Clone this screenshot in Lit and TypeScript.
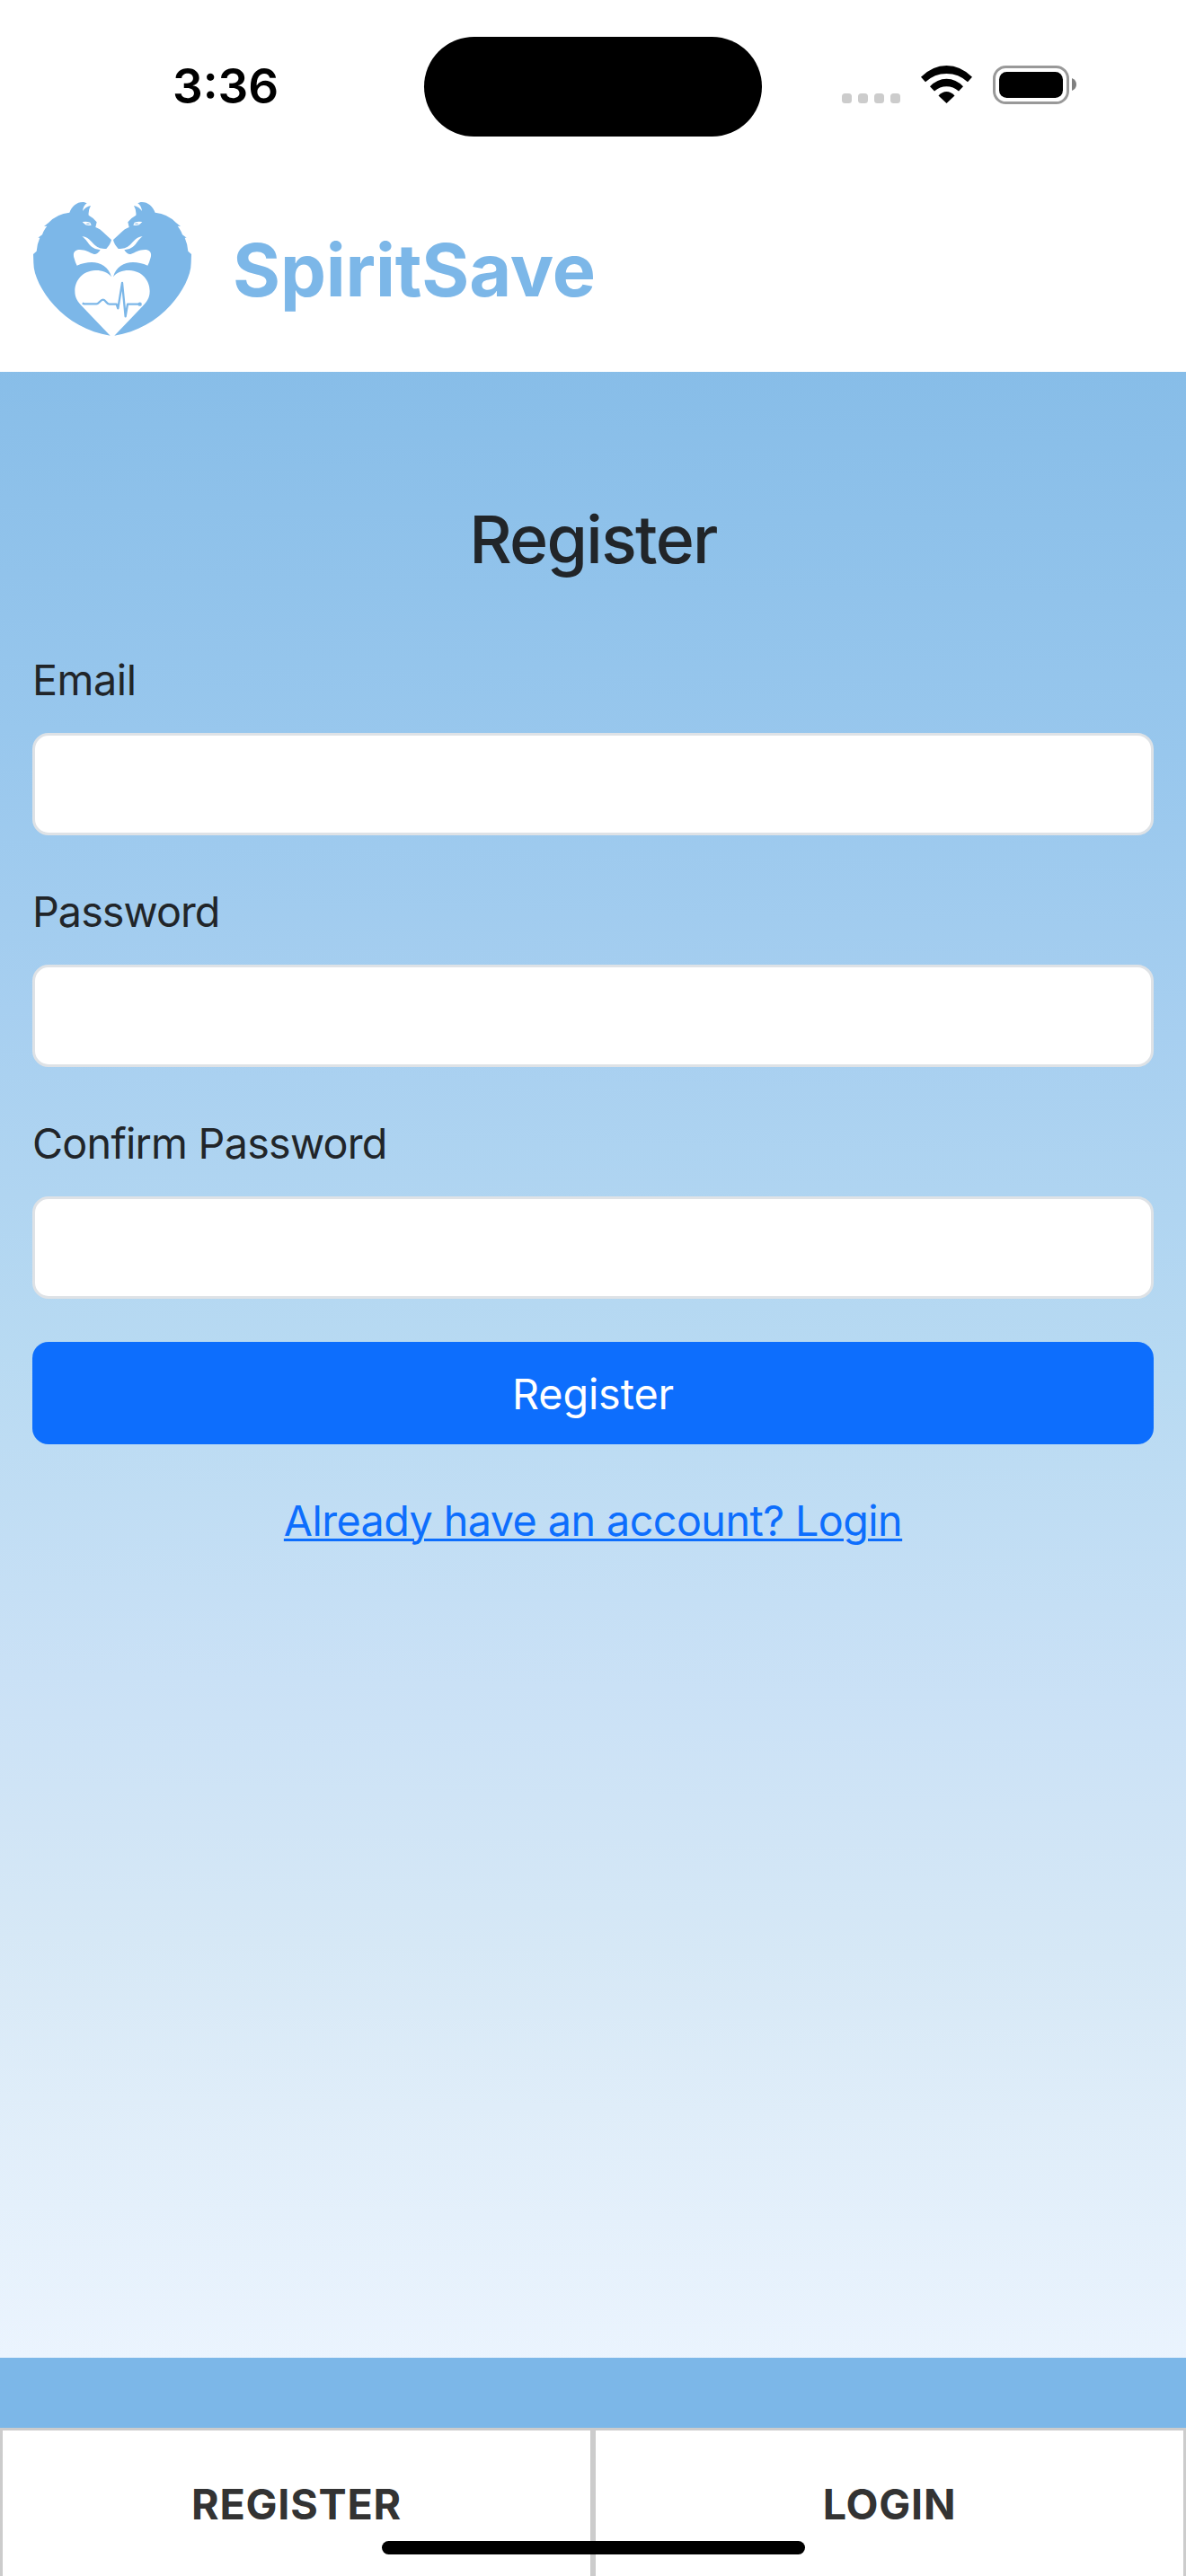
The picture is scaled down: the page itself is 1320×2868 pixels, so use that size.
import { LitElement, html, css, svg } from "lit";
import { customElement } from "lit/decorators.js";

const FIELDS = [
  { id: "email", label: "Email", type: "email", fit: "fit-email" },
  { id: "password", label: "Password", type: "password", fit: "fit-password" },
  { id: "confirm", label: "Confirm Password", type: "password", fit: "fit-confirm" },
];

// Left half of the emblem; the right half is the same shape mirrored.
const wolf = svg`
  <path fill="#7cb7e8" fill-rule="evenodd" d="M308 491C232 479 168 442 121 390C80 344 52 290 52 248
    L51 219L62 209Q64 184 73 164L67 164L81 154Q86 139 97 125L87 126L102 114Q130 84 172 80
    C180 58 198 43 220 45L230 49Q218 57 216 75Q226 60 243 57Q234 72 236 89Q252 97 263 112L259 129Q270 132 282 143L312 171
    Q310 184 295 201C277 201 268 198 257 189C242 176 235 161 214 160C229 170 232 183 247 195Q258 204 275 205
    Q266 220 254 219C238 213 226 204 206 204C188 204 183 216 187 230Q191 245 197 257
    C245 236 298 243 312 295C300 279 278 272 258 273C214 275 190 308 190 342C190 367 201 379 214 393Z
    M215 111Q229 108 241 113L245 122Q228 126 221 117Z"/>
  <path fill="#7cb7e8" d="M226 117Q234 113 242 118Q234 121 226 117Z"/>`;

@customElement("app-root")
export class AppRoot extends LitElement {
  static styles = css`
    :host { display: block; font-family: Inter, "Liberation Sans", sans-serif; color: #212529; }
    * { box-sizing: border-box; }
    .screen { height: 2868px; display: flex; flex-direction: column; background: #fff; position: relative; overflow: hidden; }
    .status { height: 177px; flex: none; display: grid; grid-template-columns: 472px 376px 472px; padding-top: 41px; }
    .time { font-size: 53px; font-weight: 600; line-height: 64px; padding: 23px 0 0 192px; color: #000; }
    .island { height: 111px; border-radius: 56px; background: #000; }
    .icons { padding: 32px 0 0 89px; }
    svg { display: block; }
    .brand { height: 237px; flex: none; display: flex; align-items: flex-start; padding: 33px 0 0 20px; }
    .name { font-size: 81px; font-weight: 700; line-height: 98px; letter-spacing: -0.15px; color: #7cb7e8; padding: 42px 0 0 29px; }
    main { flex: 1; padding: 141px 36px 0; background: linear-gradient(181.2deg, #87bde8 0%, #98c7ed 19%, #a7cff0 33%, #b8daf2 50%, #cae1f6 66%, #d6e8f6 79%, #dfedf9 87%, #ebf4fe 100%); }
    h2 { margin: 0 0 74px; font-size: 73.4px; font-weight: 500; line-height: 91px; letter-spacing: -1.65px; text-align: center; }
    .field { margin-bottom: 48px; }
    label { display: block; font-size: 46.7px; line-height: 72px; padding-top: 1px; margin-bottom: 23px; }
    .fit-email { letter-spacing: -0.45px; }
    .fit-password { letter-spacing: -0.95px; }
    .fit-confirm { letter-spacing: -0.75px; }
    input { display: block; width: 100%; height: 114px; border: 3px solid #dee2e6; border-radius: 18px; background: #fff; padding: 18px 36px; outline: none; font: inherit; }
    .submit { display: block; width: 100%; height: 114px; border: 0; border-radius: 18px; background: #0d6efd; color: #fff; font: 400 46.7px/72px Inter, sans-serif; padding: 2px 0 0; letter-spacing: -0.1px; }
    .alt { margin-top: 49px; text-align: center; font-size: 46.7px; line-height: 72px; letter-spacing: -0.56px; }
    a { color: #0d6efd; text-decoration: underline; text-decoration-thickness: 3px; text-underline-offset: 3px; }
    footer { flex: none; height: 243px; padding-top: 78px; background: #7cb7e8; display: flex; }
    .tab { flex: 1; border: 3px solid #ccc; border-bottom: 0; background: #fff; color: #333; font-size: 46.7px; font-weight: 700; line-height: 72px; letter-spacing: 0.75px; text-align: center; padding-top: 46px; }
    .home { position: absolute; left: 425px; top: 2829px; width: 471px; height: 15px; border-radius: 8px; background: #000; }
  `;

  render() {
    return html`
      <div class="screen">
        <div class="status">
          <div class="time">3:36</div>
          <div class="island"></div>
          <div class="icons">
            <svg width="262" height="43" viewBox="937 73 262 43">
              <g fill="#ccc">
                ${[937, 955, 973, 991].map((x) => svg`<rect x=${x} y="104" width="11" height="11" rx="3.5"/>`)}
              </g>
              <g fill="#000">
                <path d="M1025 85.7Q1038 73 1053.5 73T1082 85.7L1077 91.3Q1067 82 1053.5 82T1030 91.3Z"/>
                <path d="M1035 96.3Q1043 87.7 1053.5 87.7T1072 96.3L1067 101.5Q1061 96.2 1053.5 96.2T1040 101.5Z"/>
                <path d="M1044.5 106.5Q1048.5 102 1053.5 102T1062.5 106.5L1053.5 115Z"/>
              </g>
              <rect x="1106.5" y="74.5" width="82" height="40" rx="13" fill="none" stroke="#999" stroke-width="3"/>
              <rect x="1112" y="80" width="71" height="29" rx="8.5" fill="#000"/>
              <path fill="#808080" d="M1193 87Q1198 89 1198 94T1193 101Z"/>
            </svg>
          </div>
        </div>
        <div class="brand">
          <svg width="210" height="180" viewBox="0 0 630 540">
            ${wolf}
            <g transform="translate(630 0) scale(-1 1)">${wolf}</g>
            <path fill="none" stroke="#7cb7e8" stroke-width="7" stroke-linejoin="round" d="M215 383L221 385H262C271 385 275 371 284 371S296 386 305 386H329L334 400L348 315L359 427L366 386H406"/>
            <circle cx="407" cy="386" r="6.5" fill="#7cb7e8"/>
          </svg>
          <div class="name">SpiritSave</div>
        </div>
        <main>
          <h2>Register</h2>
          ${FIELDS.map(
            (f) => html`<div class="field">
              <label class=${f.fit} for=${f.id}>${f.label}</label>
              <input id=${f.id} type=${f.type} />
            </div>`
          )}
          <button class="submit">Register</button>
          <div class="alt"><a>Already have an account? Login</a></div>
        </main>
        <footer>
          <div class="tab">REGISTER</div>
          <div class="tab">LOGIN</div>
        </footer>
        <div class="home"></div>
      </div>
    `;
  }
}
